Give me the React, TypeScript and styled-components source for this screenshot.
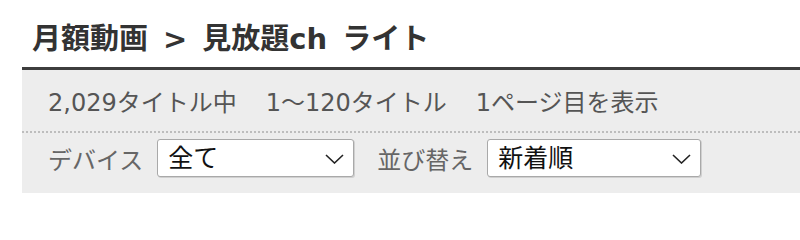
import React from 'react';
import styled, { createGlobalStyle } from 'styled-components';

const GlobalStyle = createGlobalStyle`
  body {
    margin: 0;
    background: #fff;
    font-family: "DejaVu Sans", "Noto Sans CJK JP", sans-serif;
  }
`

const Page = styled.div`
  padding-left: 22px;
`

const Title = styled.h1`
  margin: 0;
  padding: 16px 0 5px 10px;
  font-size: 29px;
  line-height: 46px;
  font-weight: bold;
  color: #333;
  word-spacing: 5px;
  white-space: nowrap;
`

const Sep = styled.span`
  margin: 0 15px;
`

const Panel = styled.div`
  border-top: 3px solid #3d3d3d;
  background: #ededed;
`

const Info = styled.div`
  display: flex;
  align-items: center;
  height: 61px;
  padding: 0 26px;
  border-bottom: 2px dotted #bdbdbd;
  font-size: 24px;
  color: #555;
  white-space: nowrap;
`

const InfoItem = styled.span`
  margin-right: 29px;
`

const Filters = styled.div`
  display: flex;
  align-items: center;
  padding: 6px 26px 16px;
`

const Label = styled.label<{ $gap?: number }>`
  font-size: 24px;
  color: #666;
  margin-left: ${p => p.$gap ?? 0}px;
  margin-right: 14px;
  white-space: nowrap;
`

const SelectWrap = styled.div<{ $width: number }>`
  position: relative;
  width: ${p => p.$width}px;
  height: 38px;
`

const Select = styled.select`
  appearance: none;
  width: 100%;
  height: 100%;
  box-sizing: border-box;
  padding: 0 40px 0 10px;
  border: 1px solid #a9a9a9;
  border-radius: 3px;
  box-shadow: 1px 1px 0 rgba(0, 0, 0, 0.12);
  background: #fff;
  font-family: inherit;
  font-size: 25px;
  color: #111;
`

const Chevron = styled.svg`
  position: absolute;
  right: 10px;
  top: 15px;
  pointer-events: none;
`

function Dropdown({ width, options }: { width: number; options: string[] }) {
  return (
    <SelectWrap $width={width}>
      <Select>
        {options.map(o => <option key={o}>{o}</option>)}
      </Select>
      <Chevron width="19" height="10" viewBox="0 0 19 10">
        <path d="M1 1 L9.5 9 L18 1" fill="none" stroke="#222" strokeWidth="1.6" />
      </Chevron>
    </SelectWrap>
  )
}

export default function App() {
  return (
    <Page>
      <GlobalStyle />
      <Title>月額動画<Sep>&gt;</Sep>見放題ch ライト</Title>
      <Panel>
        <Info>
          <InfoItem>2,029タイトル中</InfoItem>
          <InfoItem>1〜120タイトル</InfoItem>
          <InfoItem>1ページ目を表示</InfoItem>
        </Info>
        <Filters>
          <Label>デバイス</Label>
          <Dropdown width={197} options={['全て', 'PC', 'スマートフォン', 'テレビ']} />
          <Label $gap={23}>並び替え</Label>
          <Dropdown width={214} options={['新着順', '人気順', '名前順']} />
        </Filters>
      </Panel>
    </Page>
  )
}
